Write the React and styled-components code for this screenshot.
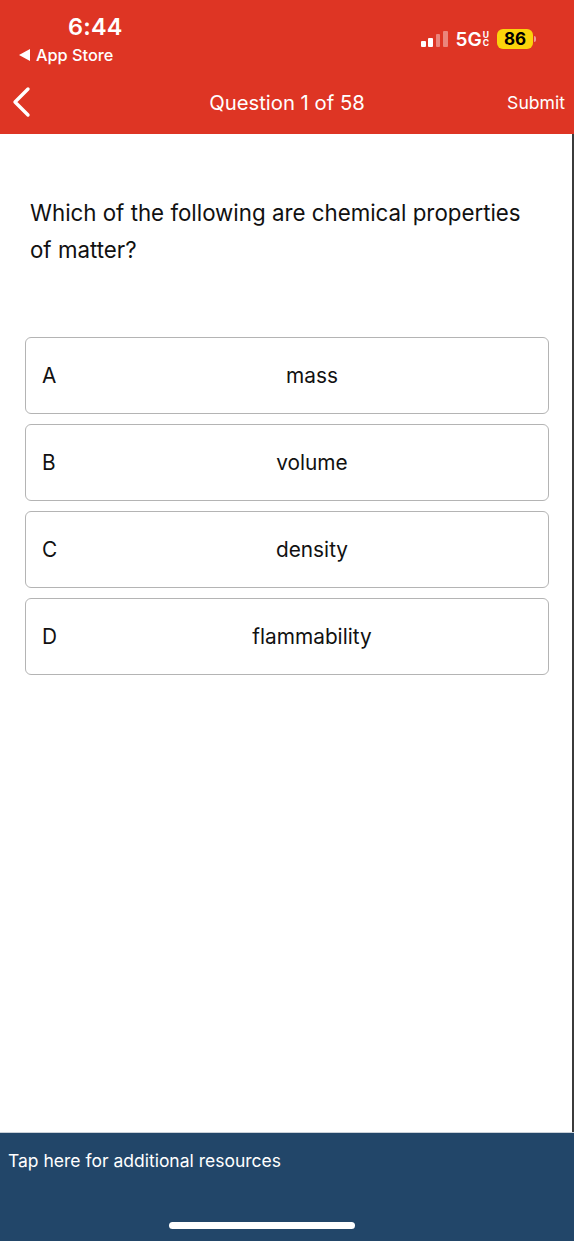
import React from 'react';
import styled, { createGlobalStyle } from 'styled-components';

const GlobalStyle = createGlobalStyle`
  html, body {
    margin: 0;
    padding: 0;
    background: #ffffff;
  }
  body {
    font-family: Inter, "Noto Sans", sans-serif;
    -webkit-font-smoothing: antialiased;
  }
`;

const Screen = styled.div`
  width: 574px;
  height: 1241px;
  display: flex;
  flex-direction: column;
  overflow: hidden;
`;

const Header = styled.header`
  background: #de3524;
  height: 134px;
  display: flex;
  flex-direction: column;
  color: #fff;
`;

const StatusBar = styled.div`
  height: 72px;
  display: flex;
  justify-content: space-between;
`;

const StatusLeft = styled.div`
  display: flex;
  flex-direction: column;
  padding-left: 19px;
  padding-top: 13px;
`;

const Time = styled.div`
  font-size: 23.5px;
  font-weight: 600;
  letter-spacing: 0.2px;
  padding-left: 49px;
  line-height: 28px;
`;

const BackToStore = styled.div`
  font-size: 16.3px;
  font-weight: 500;
  line-height: 20px;
  margin-top: 4px;
  display: flex;
  align-items: center;
  gap: 6px;
`;

const Tri = styled.span`
  width: 0;
  height: 0;
  border-top: 6px solid transparent;
  border-bottom: 6px solid transparent;
  border-right: 11px solid #fff;
`;

const StatusRight = styled.div`
  display: flex;
  align-items: center;
  padding-right: 38px;
  padding-top: 24px;
  height: 54px;
  box-sizing: border-box;
`;

const Bars = styled.div`
  display: flex;
  align-items: flex-end;
  gap: 2.8px;
  height: 16px;
  margin-right: 8px;
`;

const Bar = styled.span`
  width: 4.5px;
  height: ${p => p.h}px;
  border-radius: 1px;
  background: ${p => (p.on ? '#fff' : 'rgba(255,255,255,0.4)')};
`;

const Network = styled.div`
  display: flex;
  align-items: center;
  font-size: 19px;
  font-weight: 600;
  margin-right: 8px;
`;

const UC = styled.span`
  display: flex;
  flex-direction: column;
  font-size: 8.5px;
  line-height: 8.5px;
  font-weight: 700;
  margin-left: 1px;
`;

const Battery = styled.div`
  display: flex;
  align-items: center;
`;

const BatteryBody = styled.div`
  background: #fbd40b;
  color: #000;
  font-weight: 700;
  font-size: 17px;
  width: 36px;
  height: 20px;
  border-radius: 6px;
  display: flex;
  align-items: center;
  justify-content: center;
`;

const BatteryNub = styled.span`
  width: 2px;
  height: 6px;
  margin-left: 1px;
  border-radius: 0 2px 2px 0;
  background: rgba(255, 255, 255, 0.5);
`;

const NavRow = styled.div`
  flex: 1;
  display: grid;
  grid-template-columns: 80px 1fr 80px;
  align-items: center;
  padding-bottom: 2px;
`;

const BackButton = styled.div`
  padding-left: 10px;
  display: flex;
  align-items: center;
`;

const Title = styled.div`
  text-align: center;
  font-size: 20.3px;
  font-weight: 400;
`;

const Submit = styled.div`
  text-align: right;
  padding-right: 9px;
  font-size: 17.6px;
`;

const Body = styled.main`
  flex: 1;
  border-right: 2px solid #3b3b3b;
  display: flex;
  flex-direction: column;
`;

const Question = styled.h1`
  margin: 0;
  padding: 60px 40px 0 30px;
  font-size: 22.3px;
  font-weight: 400;
  line-height: 37px;
  color: #111;
`;

const Options = styled.div`
  display: flex;
  flex-direction: column;
  gap: 10px;
  margin: 69px 23px 0 25px;
`;

const Option = styled.div`
  height: 77px;
  box-sizing: border-box;
  border: 1.5px solid #b4b4b4;
  border-radius: 6px;
  display: flex;
  align-items: center;
  color: #111;
  font-size: 20.8px;
`;

const Letter = styled.span`
  width: 50px;
  padding-left: 16px;
  box-sizing: border-box;
`;

const Answer = styled.span`
  flex: 1;
  text-align: center;
`;

const Footer = styled.footer`
  height: 109px;
  background: #224669;
  border-top: 1px solid #c9d0d8;
  box-sizing: border-box;
  display: flex;
  flex-direction: column;
  color: #fff;
`;

const FooterLink = styled.div`
  padding: 17px 0 0 8px;
  font-size: 17.5px;
  line-height: 22px;
`;

const HomeIndicator = styled.div`
  margin: auto auto 12px 169px;
  width: 186px;
  height: 7px;
  border-radius: 4px;
  background: #fff;
`;

const options = [
  { letter: 'A', text: 'mass' },
  { letter: 'B', text: 'volume' },
  { letter: 'C', text: 'density' },
  { letter: 'D', text: 'flammability' },
];

export default function App() {
  return (
    <Screen>
      <GlobalStyle />
      <Header>
        <StatusBar>
          <StatusLeft>
            <Time>6:44</Time>
            <BackToStore>
              <Tri />
              App Store
            </BackToStore>
          </StatusLeft>
          <StatusRight>
            <Bars>
              <Bar h={6} on />
              <Bar h={9} on />
              <Bar h={13} />
              <Bar h={16} />
            </Bars>
            <Network>
              5G
              <UC>
                <span>U</span>
                <span>C</span>
              </UC>
            </Network>
            <Battery>
              <BatteryBody>86</BatteryBody>
              <BatteryNub />
            </Battery>
          </StatusRight>
        </StatusBar>
        <NavRow>
          <BackButton>
            <svg width="22" height="32" viewBox="0 0 22 32">
              <path d="M18 3 L5 16 L18 29" fill="none" stroke="#fff" strokeWidth="3.4" strokeLinecap="round" strokeLinejoin="round" />
            </svg>
          </BackButton>
          <Title>Question 1 of 58</Title>
          <Submit>Submit</Submit>
        </NavRow>
      </Header>
      <Body>
        <Question>Which of the following are chemical properties of matter?</Question>
        <Options>
          {options.map(o => (
            <Option key={o.letter}>
              <Letter>{o.letter}</Letter>
              <Answer>{o.text}</Answer>
            </Option>
          ))}
        </Options>
      </Body>
      <Footer>
        <FooterLink>Tap here for additional resources</FooterLink>
        <HomeIndicator />
      </Footer>
    </Screen>
  );
}
